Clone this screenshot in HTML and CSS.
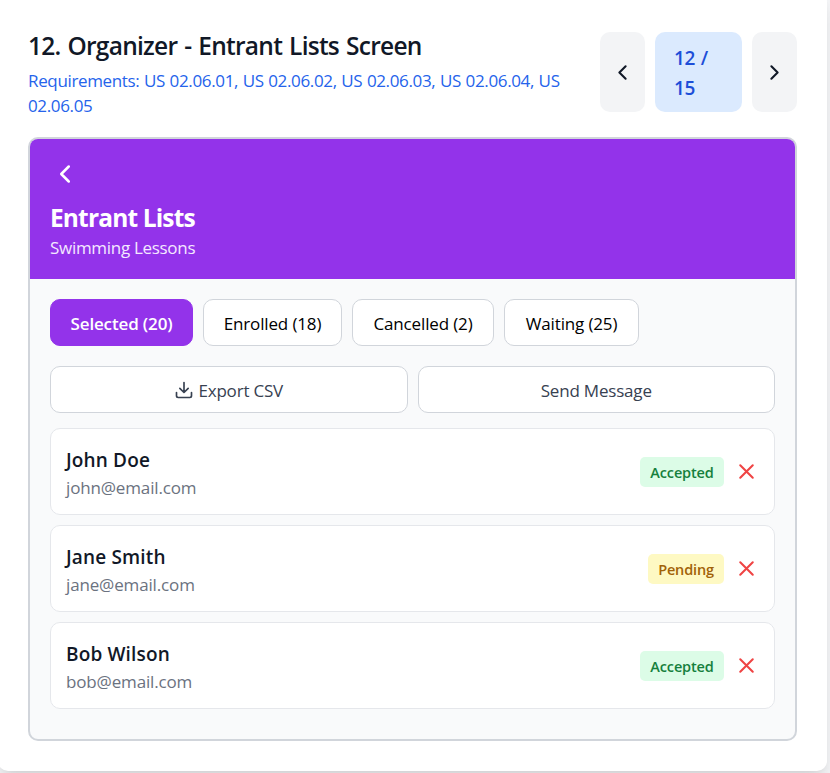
FILE: index.html
```
<!DOCTYPE html>
<html lang="en">
<head>
<meta charset="utf-8">
<title>Organizer - Entrant Lists</title>
<link rel="stylesheet" href="styles.css">
</head>
<body>
<main class="card">
  <header class="top">
    <div class="heading">
      <h1 class="title"><span>12. Organizer - Entrant Lists Screen</span></h1>
      <p class="reqs">Requirements: US 02.06.01, US 02.06.02, US 02.06.03, US 02.06.04, US<br>02.06.05</p>
    </div>
    <nav class="pager">
      <button class="step" aria-label="Previous"><svg class="step-icon" viewBox="0 0 24 24"><path d="m15 18-6-6 6-6"/></svg></button>
      <div class="count">12 /<br>15</div>
      <button class="step" aria-label="Next"><svg class="step-icon" viewBox="0 0 24 24"><path d="m9 18 6-6-6-6"/></svg></button>
    </nav>
  </header>
  <section class="frame">
    <div class="banner">
      <button class="back" aria-label="Back"><svg class="back-icon" viewBox="0 0 24 24"><path d="m15 18-6-6 6-6"/></svg></button>
      <h2 class="banner-title"><span>Entrant Lists</span></h2>
      <p class="banner-sub"><span>Swimming Lessons</span></p>
    </div>
    <div class="content">
      <div class="tabs">
        <button class="tab tab-selected active">Selected (20)</button>
        <button class="tab tab-enrolled">Enrolled (18)</button>
        <button class="tab tab-cancelled">Cancelled (2)</button>
        <button class="tab tab-waiting">Waiting (25)</button>
      </div>
      <div class="actions">
        <button class="action"><svg class="action-icon" viewBox="0 0 24 24"><path d="M21 15v4a2 2 0 0 1-2 2H5a2 2 0 0 1-2-2v-4M7 10l5 5 5-5M12 15V3"/></svg><span class="action-label">Export CSV</span></button>
        <button class="action"><span class="action-label">Send Message</span></button>
      </div>
      <ul class="list">
        <li class="row">
          <div class="person"><div class="name"><span>John Doe</span></div><div class="email"><span>john@email.com</span></div></div>
          <div class="status"><span class="badge accepted">Accepted</span><svg class="remove" viewBox="0 0 24 24"><path d="M18 6 6 18M6 6l12 12"/></svg></div>
        </li>
        <li class="row">
          <div class="person"><div class="name"><span>Jane Smith</span></div><div class="email"><span>jane@email.com</span></div></div>
          <div class="status"><span class="badge pending">Pending</span><svg class="remove" viewBox="0 0 24 24"><path d="M18 6 6 18M6 6l12 12"/></svg></div>
        </li>
        <li class="row">
          <div class="person"><div class="name"><span>Bob Wilson</span></div><div class="email"><span>bob@email.com</span></div></div>
          <div class="status"><span class="badge accepted">Accepted</span><svg class="remove" viewBox="0 0 24 24"><path d="M18 6 6 18M6 6l12 12"/></svg></div>
        </li>
      </ul>
    </div>
  </section>
</main>
</body>
</html>
```
FILE: styles.css
```
* { box-sizing: border-box; margin: 0; padding: 0; }
body { width: 830px; height: 773px; overflow: hidden; background: #f3f4f6; font-family: "Open Sans", "Noto Sans", sans-serif; color: #111827; }
button { font: inherit; color: inherit; border: 0; background: none; }
svg { fill: none; stroke: currentColor; stroke-width: 2; stroke-linecap: round; stroke-linejoin: round; display: block; flex: none; }
.card { margin: -8px 0 0 -2px; width: 829px; height: 779px; padding: 40px 30px 30px; background: #fff; border-radius: 10px; box-shadow: 0 12px 19px -4px rgba(0,0,0,.1), 0 5px 8px -5px rgba(0,0,0,.1); }
.top { display: flex; justify-content: space-between; height: 80px; margin-bottom: 25px; }
.title { font-size: 24.5px; font-weight: 600; line-height: 28px; letter-spacing: -.75px; word-spacing: 1.4px; white-space: nowrap; }
.reqs { margin-top: 8px; font-size: 17px; line-height: 25px; color: #2563eb; letter-spacing: -.35px; word-spacing: .5px; white-space: nowrap; }
.pager { display: flex; gap: 10px; }
.step { width: 45px; border-radius: 10px; background: #f3f4f6; display: grid; place-items: center; }
.step-icon { width: 25px; height: 25px; }
.count { width: 87px; padding: 11px 19px 9px; border-radius: 10px; background: #dbeafe; color: #1d4ed8; font-size: 19px; font-weight: 600; line-height: 30px; letter-spacing: -.3px; word-spacing: 1px; }
.frame { height: 604px; border: 2px solid #d1d5db; border-radius: 10px; overflow: hidden; background: #f9fafb; }
.banner { height: 140px; padding: 20px; background: #9333ea; color: #fff; }
.back { display: block; height: 30px; }
.back-icon { width: 30px; height: 30px; }
.banner-title { margin-top: 11px; font-size: 24.5px; font-weight: 700; line-height: 35px; letter-spacing: -.85px; }
.banner-sub { font-size: 17px; line-height: 25px; color: #f3e8ff; letter-spacing: -.3px; }
.content { padding: 20px; }
.tabs { display: flex; gap: 10px; }
.tab { height: 47px; padding-top: 2px; border: 1px solid #d1d5db; border-radius: 10px; background: #fff; color: #000; font-size: 17px; letter-spacing: -.15px; white-space: nowrap; }
.tab-selected { width: 143px; }
.tab-enrolled { width: 139px; }
.tab-cancelled { width: 142px; }
.tab-waiting { width: 135px; }
.active { background: #9333ea; border-color: #9333ea; color: #fff; font-weight: 600; }
.actions { display: flex; gap: 10px; margin-top: 20px; }
.action { flex: 1; height: 47px; border: 1px solid #d1d5db; border-radius: 10px; background: #fff; color: #374151; display: flex; align-items: center; justify-content: center; gap: 4px; font-size: 17px; letter-spacing: -.2px; }
.action-label { padding-top: 2px; }
.action-icon { width: 20px; height: 20px; }
.list { list-style: none; margin-top: 15px; display: grid; gap: 10px; }
.row { height: 87px; padding: 15px; border: 1px solid #e5e7eb; border-radius: 10px; background: #fff; display: flex; align-items: center; justify-content: space-between; }
.person { padding-top: 2px; }
.name { font-size: 19px; font-weight: 600; line-height: 30px; letter-spacing: .15px; }
.email { font-size: 17px; line-height: 25px; color: #6b7280; letter-spacing: -.15px; }
.status { display: flex; align-items: center; gap: 10px; }
.badge { height: 30px; border-radius: 5px; font-size: 14.5px; font-weight: 600; line-height: 31px; letter-spacing: -.15px; text-align: center; }
.accepted { width: 84px; background: #dcfce7; color: #15803d; }
.pending { width: 76px; background: #fef9c3; color: #a16207; }
.remove { width: 25px; height: 25px; color: #ef4444; }
```
